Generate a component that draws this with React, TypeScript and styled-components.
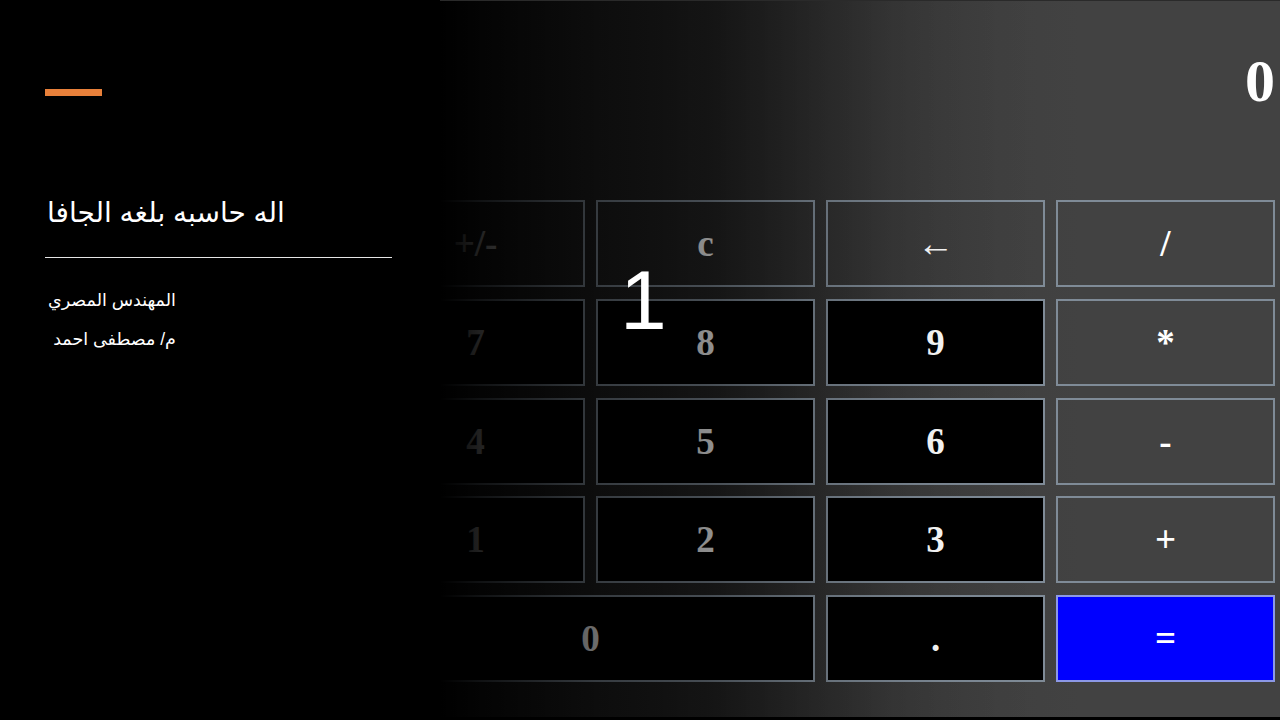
import React from "react";
import styled, { createGlobalStyle } from "styled-components";

const Global = createGlobalStyle`
  html, body { margin: 0; padding: 0; background: #000; }
  body { width: 1280px; height: 720px; overflow: hidden; }
  * { box-sizing: border-box; }
`;

const Slide = styled.div`
  position: relative;
  width: 1280px;
  height: 720px;
  display: flex;
  background: #000;
  overflow: hidden;
`;

const LeftPanel = styled.div`
  width: 440px;
  flex: none;
  padding: 89px 0 0 45px;
  display: flex;
  flex-direction: column;
  align-items: flex-start;
  font-family: "Liberation Sans", "DejaVu Sans", sans-serif;
  color: #fff;
  position: relative;
  z-index: 1;
`;

const AccentBar = styled.div`
  width: 57px;
  height: 7px;
  background: #e8803a;
`;

const Title = styled.h1`
  margin: 100px 0 0 2px;
  width: fit-content;
  direction: rtl;
  font-size: 28px;
  font-weight: normal;
  line-height: 1.2;
`;

const Divider = styled.div`
  margin-top: 27px;
  width: 347px;
  height: 1px;
  background: #e6e6e6;
`;

const Subtitle = styled.div`
  margin: 23px 0 0 3px;
  width: fit-content;
  direction: rtl;
  font-size: 17.5px;
  line-height: 39px;
`;

const Line = styled.div``;

const CalcPanel = styled.div`
  position: relative;
  flex: 1;
  min-width: 0;
  margin-bottom: 3px;
  background: linear-gradient(
    to right,
    #1c1c1c 0px,
    #1e1e1e 156px,
    #242424 266px,
    #303030 374px,
    #3a3a3a 450px,
    #404040 560px,
    #424242 640px
  );
  display: flex;
  flex-direction: column;
  padding: 0 5px 0 0;
  overflow: hidden;
  border-top: 1px solid #2a2a2a;

  &::after {
    content: "";
    position: absolute;
    inset: 0;
    pointer-events: none;
    background: linear-gradient(
      to right,
      #000 0px,
      rgba(0, 0, 0, 0.87) 40px,
      rgba(0, 0, 0, 0.58) 155px,
      rgba(0, 0, 0, 0.45) 266px,
      rgba(0, 0, 0, 0.2) 380px,
      rgba(0, 0, 0, 0.05) 500px,
      rgba(0, 0, 0, 0) 600px
    );
  }
`;

const Display = styled.div`
  height: 199px;
  padding: 50px 0 0 0;
  text-align: right;
  font-family: "Liberation Serif", serif;
  font-weight: bold;
  font-size: 60px;
  line-height: 1;
  color: #fff;
`;

const Keypad = styled.div`
  align-self: flex-end;
  flex: none;
  width: 909px;
  display: grid;
  grid-template-columns: repeat(4, 219px);
  grid-auto-rows: 87px;
  column-gap: 11px;
  row-gap: 11.75px;
`;

type Kind = "num" | "op" | "eq";

const Key = styled.div<{ $kind: Kind; $span?: number }>`
  grid-column: span ${(p) => p.$span ?? 1};
  display: flex;
  align-items: center;
  justify-content: center;
  border: 2px solid ${(p) => (p.$kind === "eq" ? "#8c98e6" : "#7f8b97")};
  background: ${(p) =>
    p.$kind === "num" ? "#000" : p.$kind === "eq" ? "#0000ff" : "transparent"};
  color: #fff;
  font-family: "Liberation Serif", serif;
  font-weight: bold;
  font-size: 37px;
  line-height: 1;
`;

const KeyLabel = styled.span`
  display: block;
`;

const SlideNumber = styled.div`
  position: absolute;
  left: 620px;
  top: 258px;
  font-family: "Liberation Sans", sans-serif;
  font-size: 84px;
  line-height: 1;
  color: #fff;
  z-index: 2;
`;

const keys: { label: string; kind: Kind; span?: number }[] = [
  { label: "+/-", kind: "op" },
  { label: "c", kind: "op" },
  { label: "←", kind: "op" },
  { label: "/", kind: "op" },
  { label: "7", kind: "num" },
  { label: "8", kind: "num" },
  { label: "9", kind: "num" },
  { label: "*", kind: "op" },
  { label: "4", kind: "num" },
  { label: "5", kind: "num" },
  { label: "6", kind: "num" },
  { label: "-", kind: "op" },
  { label: "1", kind: "num" },
  { label: "2", kind: "num" },
  { label: "3", kind: "num" },
  { label: "+", kind: "op" },
  { label: "0", kind: "num", span: 2 },
  { label: ".", kind: "num" },
  { label: "=", kind: "eq" },
];

export default function App() {
  return (
    <>
      <Global />
      <Slide>
        <LeftPanel>
          <AccentBar />
          <Title>اله حاسبه بلغه الجافا</Title>
          <Divider />
          <Subtitle>
            <Line>المهندس المصري</Line>
            <Line>م/ مصطفى احمد </Line>
          </Subtitle>
        </LeftPanel>
        <CalcPanel>
          <Display>0</Display>
          <Keypad>
            {keys.map((k) => (
              <Key key={k.label} $kind={k.kind} $span={k.span}>
                <KeyLabel>{k.label}</KeyLabel>
              </Key>
            ))}
          </Keypad>
        </CalcPanel>
        <SlideNumber>1</SlideNumber>
      </Slide>
    </>
  );
}
